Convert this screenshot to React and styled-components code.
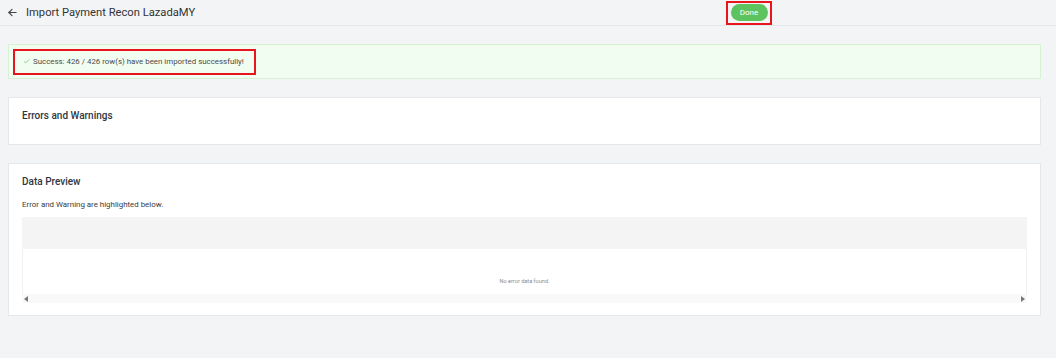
import styled, { createGlobalStyle } from 'styled-components'

const GlobalStyle = createGlobalStyle`
    html, body {
        margin: 0;
        padding: 0;
        background: #f3f4f6;
        font-family: Roboto, "Liberation Sans", Arial, sans-serif;
        color: #333;
    }
`;

const Page = styled.div`
    width: 1056px;
    height: 358px;
    background: #f3f4f6;
    overflow: hidden;
`;

const Header = styled.div`
    display: flex;
    align-items: center;
    height: 26px;
    padding-left: 7px;
    border-bottom: 1px solid #e6e7ea;
    box-sizing: border-box;
`;

const BackIcon = styled.svg`
    width: 11px;
    height: 11px;
    margin-right: 8px;
`;

const Title = styled.div`
    font-size: 11.2px;
    color: #333;
    flex: 1;
`;

const Highlight = styled.div`
    border: 2px solid #e8161c;
    display: flex;
    align-items: center;
    box-sizing: border-box;
`;

const DoneWrap = styled(Highlight)`
    margin-right: 284px;
    height: 24px;
    width: 46px;
    justify-content: center;
`;

const DoneButton = styled.button`
    border: none;
    background: #5cc35f;
    color: #fff;
    font-family: inherit;
    font-size: 8px;
    height: 17px;
    width: 37px;
    border-radius: 9px;
    padding: 0;
`;

const Main = styled.div`
    display: flex;
    flex-direction: column;
    gap: 18px;
    padding: 18px 15px 0 8px;
`;

const Banner = styled.div`
    background: #f2fdf1;
    border: 1px solid #d5f3d2;
    height: 35px;
    box-sizing: border-box;
    padding: 3px 4px;
    display: flex;
    align-items: center;
`;

const SuccessText = styled(Highlight)`
    height: 26px;
    padding: 0 10px 0 8px;
    font-size: 7.9px;
    color: #4a4a4a;
    gap: 3px;
`;

const Card = styled.div`
    background: #fff;
    border: 1px solid #e6e7ea;
    padding: ${p => p.$pad || '12px 13px'};
    box-sizing: border-box;
    height: ${p => p.$h}px;
`;

const CardTitle = styled.div`
    font-size: 10px;
    font-weight: 500;
    color: #2f3640;
    line-height: 12px;
`;

const Hint = styled.div`
    font-size: 7.9px;
    color: #3a3a3a;
    margin: 12px 0 7px;
    line-height: 10px;
`;

const Table = styled.div`
    display: flex;
    flex-direction: column;
`;

const TableHead = styled.div`
    height: 32px;
    background: #f4f4f5;
`;

const TableBody = styled.div`
    height: 45px;
    background: #fff;
    border-left: 1px solid #f0f0f0;
    border-right: 1px solid #f0f0f0;
    display: flex;
    align-items: flex-end;
    justify-content: center;
    padding-bottom: 10px;
    box-sizing: border-box;
`;

const Empty = styled.div`
    font-size: 5.6px;
    color: #8c8c8c;
`;

const Scrollbar = styled.div`
    height: 9px;
    background: #f9f9f9;
    display: flex;
    align-items: center;
    justify-content: space-between;
    padding: 0 2px;
`;

const Arrow = styled.div`
    width: 0;
    height: 0;
    border-top: 3px solid transparent;
    border-bottom: 3px solid transparent;
    ${p => p.$dir === 'left'
        ? 'border-right: 4px solid #777;'
        : 'border-left: 4px solid #777;'}
`;

export default function App() {
    return (
        <Page>
            <GlobalStyle />
            <Header>
                <BackIcon viewBox="0 0 24 24" fill="none" stroke="#444" strokeWidth="2.4" strokeLinecap="round" strokeLinejoin="round">
                    <path d="M20 12H4" />
                    <path d="M11 5l-7 7 7 7" />
                </BackIcon>
                <Title>Import Payment Recon LazadaMY</Title>
                <DoneWrap>
                    <DoneButton>Done</DoneButton>
                </DoneWrap>
            </Header>
            <Main>
                <Banner>
                    <SuccessText>
                        <svg width="7" height="7" viewBox="0 0 24 24" fill="none" stroke="#6cc06a" strokeWidth="2.5" strokeLinecap="round" strokeLinejoin="round">
                            <path d="M4 12l5 5L20 6" />
                        </svg>
                        Success: 426 / 426 row(s) have been imported successfully!
                    </SuccessText>
                </Banner>
                <Card $h={48} $pad="12px 13px">
                    <CardTitle>Errors and Warnings</CardTitle>
                </Card>
                <Card $h={153} $pad="12px 13px">
                    <CardTitle>Data Preview</CardTitle>
                    <Hint>Error and Warning are highlighted below.</Hint>
                    <Table>
                        <TableHead />
                        <TableBody>
                            <Empty>No error data found.</Empty>
                        </TableBody>
                        <Scrollbar>
                            <Arrow $dir="left" />
                            <Arrow $dir="right" />
                        </Scrollbar>
                    </Table>
                </Card>
            </Main>
        </Page>
    )
}
